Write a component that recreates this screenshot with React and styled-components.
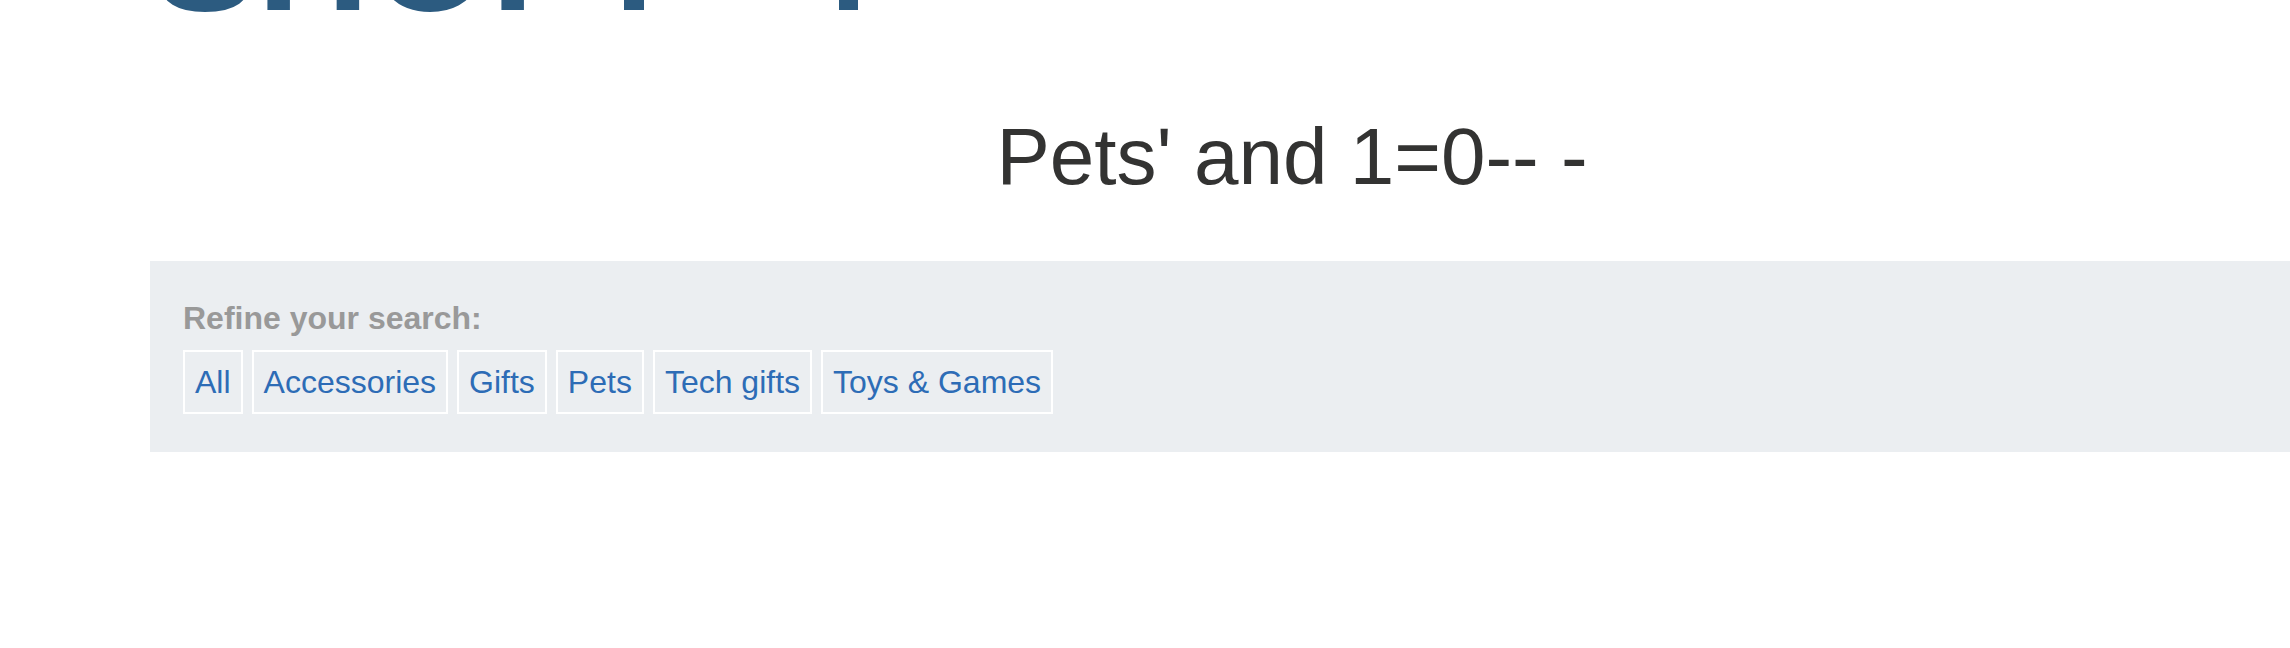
import React from "react"
import styled, { createGlobalStyle } from "styled-components"

const categories = ["All", "Accessories", "Gifts", "Pets", "Tech gifts", "Toys & Games"]

const GlobalStyle = createGlobalStyle`
  html, body {
    margin: 0;
    padding: 0;
    background: #fff;
    overflow: hidden;
  }
  body {
    font-family: "Liberation Sans", Arial, sans-serif;
  }
`

const App = () => (
  <>
    <GlobalStyle />
    <Page>
      <Banner>
        <LogoText>SHOP</LogoText>
        <LogoMark viewBox="0 0 260 60" width="260" height="60">
          <rect x="17" y="0" width="20" height="60" fill="#2c5b80" />
          <rect x="232" y="0" width="19" height="60" fill="#2c5b80" />
        </LogoMark>
      </Banner>

      <Title>Pets' and 1=0-- -</Title>

      <Filters>
        <FilterLabel>Refine your search:</FilterLabel>
        <CategoryList>
          {categories.map(name => (
            <CategoryLink key={name} href="#">
              {name}
            </CategoryLink>
          ))}
        </CategoryList>
      </Filters>
    </Page>
  </>
)

export default App

const Page = styled.div`
  width: 2284px;
  margin-left: 150px;
`

const Banner = styled.div`
  display: flex;
  align-items: flex-end;
  height: 10px;
  padding-left: 3px;
`

const LogoText = styled.span`
  display: block;
  width: 454px;
  flex-shrink: 0;
  font-family: "Liberation Sans", Arial, sans-serif;
  font-weight: bold;
  font-size: 156px;
  line-height: 0.693;
  color: #2c5b80;
  white-space: nowrap;
`

const LogoMark = styled.svg`
  display: block;
  flex-shrink: 0;
`

const Title = styled.h1`
  margin: 103px 0 60px;
  font-size: 80px;
  line-height: 88px;
  font-weight: normal;
  text-align: center;
  color: #333332;
`

const Filters = styled.div`
  background: #ebeef1;
  padding: 37px 33px 38px;
`

const FilterLabel = styled.div`
  font-size: 32px;
  line-height: 40px;
  font-weight: bold;
  color: #999;
  margin-bottom: 12px;
`

const CategoryList = styled.div`
  display: flex;
  flex-wrap: wrap;
  gap: 9px;
`

const CategoryLink = styled.a`
  display: block;
  padding: 10px;
  border: 2px solid #fff;
  font-size: 32px;
  line-height: 40px;
  color: #2d6cb6;
  text-decoration: none;
`
